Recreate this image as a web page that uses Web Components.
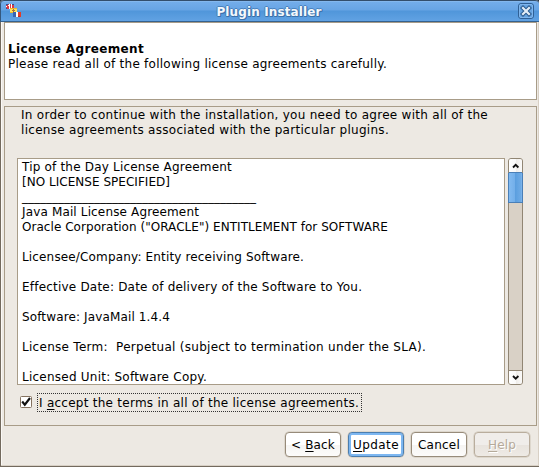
<!DOCTYPE html>
<html lang="en"><head><meta charset="utf-8"><title>Plugin Installer</title>
<style>
html,body{margin:0;width:539px;height:467px;overflow:hidden;background:#fff}
body{font:12px/15px "DejaVu Sans",sans-serif;color:#000}
</style></head><body>
<dialog-window>
 <title-bar slot="title">Plugin Installer</title-bar>
 <wizard-header><fit-text slot="heading" w="136">License Agreement</fit-text><fit-text w="379">Please read all of the following license agreements carefully.</fit-text></wizard-header>
 <wizard-panel>
  <fit-text slot="intro" w="467">In order to continue with the installation, you need to agree with all of the</fit-text>
  <fit-text slot="intro" w="368">license agreements associated with the particular plugins.</fit-text>
  <license-view>
   <fit-text w="210">Tip of the Day License Agreement</fit-text>
   <fit-text w="148">[NO LICENSE SPECIFIED]</fit-text>
   <fit-text w="234">_______________________________________</fit-text>
   <fit-text w="177">Java Mail License Agreement</fit-text>
   <fit-text w="366">Oracle Corporation ("ORACLE") ENTITLEMENT for SOFTWARE</fit-text>
   <fit-text></fit-text>
   <fit-text w="282">Licensee/Company: Entity receiving Software.</fit-text>
   <fit-text></fit-text>
   <fit-text w="340">Effective Date: Date of delivery of the Software to You.</fit-text>
   <fit-text></fit-text>
   <fit-text w="148">Software: JavaMail 1.4.4</fit-text>
   <fit-text></fit-text>
   <fit-text w="404">License Term:&nbsp; Perpetual (subject to termination under the SLA).</fit-text>
   <fit-text></fit-text>
   <fit-text w="185">Licensed Unit: Software Copy.</fit-text>
  </license-view>
  <check-option slot="option"><fit-text w="320">I <u>a</u>ccept the terms in all of the license agreements.</fit-text></check-option>
 </wizard-panel>
 <push-button slot="actions"><fit-text w="44">&lt; <u>B</u>ack</fit-text></push-button>
 <push-button slot="actions" primary><fit-text w="46"><u>U</u>pdate</fit-text></push-button>
 <push-button slot="actions"><fit-text w="42">Cancel</fit-text></push-button>
 <push-button slot="actions" disabled><fit-text w="28"><u>H</u>elp</fit-text></push-button>
</dialog-window>
<script>
const define=(name,html,init)=>customElements.define(name,class extends HTMLElement{
  constructor(){super();this.attachShadow({mode:'open'}).innerHTML=html}
  connectedCallback(){if(init)init(this)}
});
// A single line whose tracking is adjusted so that it spans w pixels.
define('fit-text',`<style>:host{display:block;height:15px;white-space:pre}span{display:inline-block}::slotted(u){text-underline-offset:2px;text-decoration-thickness:1px;text-decoration-skip-ink:none}</style><span><slot></slot></span>`,el=>{
  const w=+el.getAttribute('w'),s=el.shadowRoot.querySelector('span');
  if(w)requestAnimationFrame(()=>{const n=el.textContent.length;s.style.letterSpacing=(w-s.getBoundingClientRect().width)/n+'px'});
});
define('dialog-window',`<style>
:host{display:flex;flex-direction:column;box-sizing:border-box;width:539px;height:467px;background:#ede9e3;overflow:hidden}
main{flex:1;min-height:0;box-sizing:border-box;border:1px solid #736a5e;border-width:0 0 1px 1px;box-shadow:inset -1px -1px #d8d0c5,inset 1px 0 #fbf9f6;padding:0 2px 0 3px;display:flex;flex-direction:column}
footer{display:flex;justify-content:flex-end;gap:7px;padding:6px 7px 0 0}
</style><slot name="title"></slot><main><slot></slot><footer><slot name="actions"></slot></footer></main>`);
define('title-bar',`<style>
:host{display:grid;grid-template-columns:23px 1fr 25px;align-items:center;box-sizing:border-box;height:22px;border-top:1px solid #334e6c;border-bottom:1px solid #35628f;border-left:1px solid #35587e;border-radius:4px 4px 0 0;background:linear-gradient(#94c2f2 0,#73adea 1px,#67a4e4 9px,#5096da 10px,#61a2e3 20px);box-shadow:0 0 0 4px #27384a;clip-path:inset(0);color:#f4f8fc;font-weight:bold}
b{justify-self:center;font-size:12px;line-height:15px;letter-spacing:.13px;padding-top:2px;text-shadow:1px 0 #3c72ab,-1px 0 #4a82bd,0 1px #3c72ab,0 -1px #4a82bd,1px 1px #3c72ab}
svg{display:block}.icon{margin-left:4px}.close{margin-left:4px}
</style><svg class="icon" width="18" height="18" viewBox="0 0 18 18" shape-rendering="crispEdges">
<path fill="#d93945" d="M1 2h8v5H1z"/><path fill="#31558f" d="M1 2h2v1H1zM7 2h2v1H7zM1 6h1v1H1zM7 6h2v1H7z"/><path fill="#fff" d="M4 2h1v5H4zM6 2h1v5H6zM1 4h1v1H1zM3 3h1v1H3z"/><path fill="#d93945" d="M5 2h1v5H5z"/>
<path fill="#edb52e" d="M5 6h7v5H5z"/><path fill="#ffe35d" d="M5 7h7v3H5z"/><path fill="#a97132" d="M8 7h1v3H8zM7 8h3v1H7z"/>
<path fill="#3764b2" d="M8 10h3v5H8z"/><path fill="#fff" d="M11 10h2v5h-2z"/><path fill="#e53b25" d="M13 10h3v5h-3z"/><path fill="#b62b24" d="M13 14h2v1h-2z"/></svg><b><slot></slot></b>
<svg class="close" width="18" height="18" viewBox="0 0 18 18"><rect x=".5" y="1.5" width="15" height="15" rx="2.5" fill="#66a3df" stroke="#2f6095"/><rect x="1.5" y="2.500" width="13" height="13" rx="1.5" fill="none" stroke="#7eb5ed"/><path d="M5 6l6 6M11 6l-6 6" stroke="#28598e" stroke-width="4.2" stroke-linecap="square"/><path d="M5 6l6 6M11 6l-6 6" stroke="#e2edf7" stroke-width="2.2" stroke-linecap="square"/></svg>`);
define('wizard-header',`<style>:host{display:block;box-sizing:border-box;width:533px;height:78px;border:1px solid #a89c88;background:#fff;padding:19px 3px 0}.h{font-weight:bold}</style><div class="h"><slot name="heading"></slot></div><slot></slot>`);
define('wizard-panel',`<style>:host{display:block;box-sizing:border-box;width:533px;height:320px;margin-top:6px;border:1px solid #a89c88}.intro{box-sizing:border-box;padding:1px 16px 0;height:51px}.view{margin-left:12px}.opt{margin:8px 0 0 15px}</style><div class="intro"><slot name="intro"></slot></div><div class="view"><slot></slot></div><div class="opt"><slot name="option"></slot></div>`);
define('license-view',`<style>
:host{display:flex;gap:3px;height:227px}.page{box-sizing:border-box;width:488px;border:1px solid #a89c88;background:#fff;padding:1px 4px 0;overflow:hidden}
</style><div class="page"><slot></slot></div><scroll-track></scroll-track>`);
define('scroll-track',`<style>
:host{display:flex;flex-direction:column;box-sizing:border-box;width:15px;height:227px;border:1px solid #918674;border-radius:3px;background:#d9d1c6}
i{display:block;box-sizing:border-box;height:14px;border-radius:2px 2px 0 0;background:linear-gradient(90deg,#fff,#fafafa 50%,#eeece9 52%,#fbfaf9);border-bottom:1px solid #4a7fb7}.end{margin-top:auto;border:0;border-top:1px solid #918674;border-radius:0 0 2px 2px}
.thumb{height:30px;margin:0 -1px;border:1px solid #4a7fb7;border-top:0;box-sizing:border-box;background:linear-gradient(90deg,#82baf0,#72aee9 48%,#5c9fdf 50%,#6daae5 90%,#82b8ee)}svg{display:block}
</style><i><svg width="13" height="13"><path d="M4 8.5l2.700-2.700 2.700 2.700" fill="none" stroke="#111" stroke-width="1.800"/></svg></i><div class="thumb"></div><i class="end"><svg width="13" height="13"><path d="M4 5l2.700 2.700L9.400 5" fill="none" stroke="#111" stroke-width="1.800"/></svg></i>`);
define('check-option',`<style>
:host{display:flex;gap:4px;height:19px}svg{margin-top:1px}.label{box-sizing:border-box;width:325px;height:19px;padding:3px 2px 0;background:repeating-linear-gradient(90deg,#333 0 1px,transparent 1px 2px) top/100% 1px no-repeat,repeating-linear-gradient(90deg,#333 0 1px,transparent 1px 2px) bottom/100% 1px no-repeat,repeating-linear-gradient(#333 0 1px,transparent 1px 2px) left/1px 100% no-repeat,repeating-linear-gradient(#333 0 1px,transparent 1px 2px) right/1px 100% no-repeat}
</style><svg width="13" height="15"><rect x=".5" y="2.500" width="11" height="11" rx="1" fill="#fff" stroke="#85725f"/><path d="M2.200 7.500l2.600 3.200 5.200-6.700" fill="none" stroke="#111" stroke-width="2.100"/></svg><div class="label"><slot></slot></div>`);
define('push-button',`<style>
:host{display:flex;box-sizing:border-box;width:56px;height:25px;justify-content:center;padding-top:5px;border:1px solid #978b7a;border-radius:4px;background:linear-gradient(#fff 50%,#f6f5f3 52%,#fcfbfa);box-shadow:0 0 0 .5px #cec5b8}
:host([primary]){border-color:#4c7eaf;box-shadow:inset 0 0 0 2px #7db7f1,0 0 0 .5px #cec5b8;background:#fff}
:host([disabled]){color:#b5aa9a;text-shadow:1px 1px #fff;border-color:#b9ad9d;background:linear-gradient(#f0edea 50%,#e8e3dd 52%,#eeeae5)}
</style><slot></slot>`);
</script></body></html>
